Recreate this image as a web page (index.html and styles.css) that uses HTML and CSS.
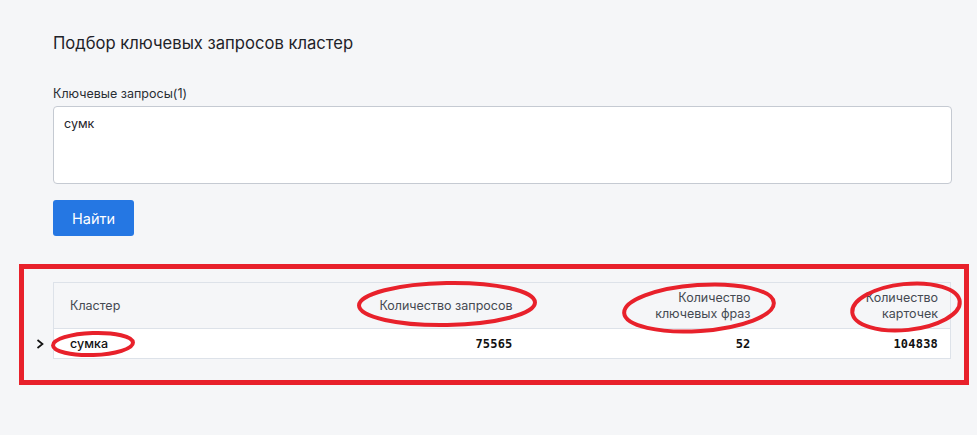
FILE: index.html
```html
<!DOCTYPE html>
<html lang="ru">
<head>
  <meta charset="UTF-8" />
  <meta name="viewport" content="width=device-width, initial-scale=1.0" />
  <title>Подбор ключевых запросов кластер</title>
  <link rel="stylesheet" href="styles.css">
</head>
<body>
  <div class="page">
    <h1 class="title">Подбор ключевых запросов кластер</h1>
    <form class="search-form" onsubmit="return false">
      <label class="field-label" for="queries">Ключевые запросы(1)</label>
      <textarea id="queries" class="queries">сумк</textarea>
      <button class="btn-primary" type="submit">Найти</button>
    </form>
  </div>

  <section class="results">
    <table class="cluster-table">
      <colgroup>
        <col>
        <col class="col-queries">
        <col class="col-phrases">
        <col class="col-cards">
      </colgroup>
      <thead>
        <tr>
          <th>Кластер</th>
          <th class="num">Количество запросов</th>
          <th class="num">Количество<br>ключевых фраз</th>
          <th class="num">Количество<br>карточек</th>
        </tr>
      </thead>
      <tbody>
        <tr>
          <td class="cluster-name">
            <svg class="expander" width="10" height="12" viewBox="0 0 10 12">
              <path d="M2.5 2 L7.5 6 L2.5 10" />
            </svg>
            сумка
          </td>
          <td class="num mono">75565</td>
          <td class="num mono">52</td>
          <td class="num mono">104838</td>
        </tr>
      </tbody>
    </table>

    <!-- hand-drawn marks on top of the table -->
    <svg class="marks" width="950" height="121" viewBox="0 0 950 121">
      <ellipse cx="428" cy="40" rx="88" ry="21" transform="rotate(-1 428 40)" />
      <ellipse cx="680" cy="44" rx="75" ry="23" transform="rotate(-4 680 44)" />
      <ellipse cx="887" cy="43" rx="54" ry="23" transform="rotate(-6 887 43)" />
      <ellipse cx="74" cy="80" rx="40" ry="11" transform="rotate(-2 74 80)" />
    </svg>
  </section>
</body>
</html>
```

FILE: styles.css
```css
* {
  box-sizing: border-box;
}
body {
  margin: 0;
  background: #f5f6f8;
  color: #1f2329;
  font-family: Inter, "Noto Sans", Arial, sans-serif;
}
.page {
  padding: 33px 25px 0 53px;
}
.title {
  margin: 0;
  font-size: 16.6px;
  font-weight: 400;
  line-height: 20px;
  color: #1f2329;
}
.search-form {
  display: flex;
  flex-direction: column;
  align-items: flex-start;
  margin-top: 33px;
}
.field-label {
  font-size: 12.5px;
  line-height: 16px;
  color: #2a2e34;
  margin-bottom: 4px;
}
.queries {
  width: 100%;
  height: 78px;
  padding: 9px 10px;
  border: 1px solid #c5cad2;
  border-radius: 4px;
  background: #fff;
  font-family: inherit;
  font-size: 12.5px;
  color: #1f2329;
  resize: none;
  outline: none;
}
.btn-primary {
  margin-top: 16px;
  width: 81px;
  height: 36px;
  border: none;
  border-radius: 3px;
  background: #2577e3;
  color: #fff;
  font-family: inherit;
  font-size: 14.5px;
  cursor: pointer;
}
.results {
  position: relative;
  margin: 28px 0 0 19px;
  width: 950px;
  padding: 13px 12px 21px 29px;
  border: 5px solid #e8212b;
}
.cluster-table {
  width: 898px;
  border-collapse: collapse;
  border: 1px solid #dde2e9;
  font-size: 12.5px;
  table-layout: fixed;
}
.col-queries {
  width: 230px;
}
.col-phrases {
  width: 238px;
}
.col-cards {
  width: 188px;
}
.cluster-table th {
  height: 46px;
  padding: 0 12px 0 16px;
  font-weight: 400;
  line-height: 16px;
  color: #454a52;
  text-align: left;
  border-bottom: 1px solid #dde2e9;
}
.cluster-table td {
  height: 30px;
  padding: 0 12px 0 16px;
  background: #fff;
  color: #111;
}
.cluster-table .num {
  text-align: right;
}
.cluster-name {
  position: relative;
  font-weight: 500;
}
.expander {
  position: absolute;
  left: -19px;
  top: 9px;
}
.expander path {
  fill: none;
  stroke: #111;
  stroke-width: 1.7;
}
.mono {
  font-family: "DejaVu Sans Mono", "Liberation Mono", monospace;
  font-size: 12px;
  font-weight: 700;
  letter-spacing: 0.2px;
}
.marks {
  position: absolute;
  left: -5px;
  top: -5px;
  pointer-events: none;
}
.marks ellipse {
  fill: none;
  stroke: #e8212b;
  stroke-width: 4;
}
```
